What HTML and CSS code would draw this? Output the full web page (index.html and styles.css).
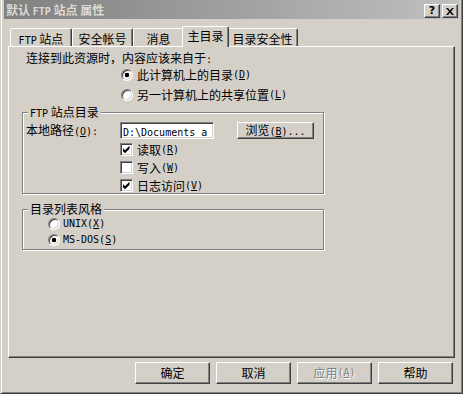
FILE: index.html
```html
<!DOCTYPE html>
<html lang="zh-CN">
<head>
  <meta charset="UTF-8" />
  <title>默认 FTP 站点 属性</title>
  <link rel="stylesheet" href="styles.css">
</head>
<body>
  <div class="window">
    <div class="titlebar">
      <span class="title">默认 <span class="lat">FTP</span> 站点 属性</span>
      <div class="caption-btns">
        <span class="cbtn help">?</span>
        <span class="cbtn">
          <svg width="8" height="7" viewBox="0 0 8 7"><path d="M0 0h2l2 2.4 2-2.4h2l-3 3.5 3 3.5h-2l-2-2.4-2 2.4h-2l3-3.5z" fill="#000"/></svg>
        </span>
      </div>
    </div>

    <div class="tabs">
      <div class="tab tab-ftp"><span class="lat">FTP</span> 站点</div>
      <div class="tab tab-acct">安全帐号</div>
      <div class="tab tab-msg">消息</div>
      <div class="tab tab-home">主目录</div>
      <div class="tab tab-sec">目录安全性</div>
    </div>

    <div class="panel">
      <div class="intro">连接到此资源时，内容应该来自于<span class="lat">:</span></div>
      <div class="opt opt-first">
        <span class="radio on"></span>此计算机上的目录<span class="lat">(<u>D</u>)</span>
      </div>
      <div class="opt opt-second">
        <span class="radio"></span>另一计算机上的共享位置<span class="lat">(<u>L</u>)</span>
      </div>

      <div class="group group-dir">
        <div class="group-title"><span class="lat">FTP</span> 站点目录</div>
        <div class="path-row">
          <span class="path-label">本地路径<span class="lat">(<u>O</u>):</span></span>
          <div class="edit"><span class="lat">D:\Documents a</span></div>
          <div class="btn btn-browse"><span>浏览<span class="lat">(<u>B</u>)...</span></span></div>
        </div>
        <div class="checks">
          <div class="check-row">
            <span class="checkbox"><svg width="9" height="9" viewBox="0 0 9 9"><path d="M1 3.3l2 2 4.5-4.5v2.9l-4.5 4.5-2-2z" fill="#000"/></svg></span>读取<span class="lat">(<u>R</u>)</span>
          </div>
          <div class="check-row">
            <span class="checkbox"></span>写入<span class="lat">(<u>W</u>)</span>
          </div>
          <div class="check-row">
            <span class="checkbox"><svg width="9" height="9" viewBox="0 0 9 9"><path d="M1 3.3l2 2 4.5-4.5v2.9l-4.5 4.5-2-2z" fill="#000"/></svg></span>日志访问<span class="lat">(<u>V</u>)</span>
          </div>
        </div>
      </div>

      <div class="group group-list">
        <div class="group-title">目录列表风格</div>
        <div class="opt opt-unix">
          <span class="radio"></span><span class="lat">UNIX(<u>X</u>)</span>
        </div>
        <div class="opt opt-dos">
          <span class="radio on"></span><span class="lat">MS-DOS(<u>S</u>)</span>
        </div>
      </div>
    </div>

    <div class="actions">
      <div class="btn">确定</div>
      <div class="btn">取消</div>
      <div class="btn disabled">应用<span class="lat">(<u>A</u>)</span></div>
      <div class="btn">帮助</div>
    </div>
  </div>
</body>
</html>
```

FILE: styles.css
```css
* {
  box-sizing: border-box;
}
body {
  margin: 0;
  background: #d4d0c8;
  font: 12px/12px "Noto Sans CJK SC", sans-serif;
  color: #000;
}
.lat {
  font-family: "DejaVu Sans Mono", monospace;
  font-size: 10px;
}

.window {
  width: 463px;
  height: 394px;
  padding: 0 3px;
  background: #d4d0c8;
  border-left: 1px solid #d4d0c8;
  border-right: 1px solid #404040;
  border-bottom: 1px solid #404040;
  box-shadow: inset 1px 0 #fff, inset -1px -1px #808080;
}

/* title bar (inactive) */
.titlebar {
  display: flex;
  justify-content: space-between;
  height: 19px;
  padding-left: 2px;
  background: linear-gradient(to right, #808080, #c0c0c0);
  color: #dedad2;
  font-weight: bold;
  line-height: 19px;
}
.caption-btns {
  display: flex;
  gap: 2px;
  margin: 4px 1px 0 0;
}
.cbtn {
  display: flex;
  align-items: center;
  justify-content: center;
  width: 16px;
  height: 14px;
  background: #d4d0c8;
  border: 1px solid;
  border-color: #fff #404040 #404040 #fff;
  box-shadow: inset -1px -1px #808080;
  color: #000;
}
.cbtn.help {
  font: bold 11px/12px "DejaVu Sans", sans-serif;
}

/* tabs */
.tabs {
  display: flex;
  align-items: flex-end;
  height: 20px;
  margin: 7px 0 0 6px;
}
.tab {
  height: 18px;
  padding-top: 4px;
  text-align: center;
  background: #d4d0c8;
  border: 1px solid;
  border-bottom: 0;
  border-color: #fff #404040 transparent #fff;
  border-radius: 2px 2px 0 0;
  box-shadow: inset -1px 0 #808080;
}
.tab-ftp { width: 62px; }
.tab-acct { width: 61px; }
.tab-msg { width: 51px; }
.tab-home {
  position: relative;
  z-index: 1;
  width: 47px;
  height: 21px;
  padding-top: 3px;
  margin: 0 -2px -1px;
}
.tab-sec { width: 71px; }

.panel {
  width: 447px;
  height: 312px;
  margin-left: 4px;
  padding: 5px 0 0 13px;
  border: 1px solid;
  border-color: #fff #404040 #404040 #fff;
  box-shadow: inset -1px -1px #808080;
}
.intro {
  margin-left: 4px;
  height: 12px;
}

.opt {
  display: flex;
  align-items: center;
  height: 12px;
}
.opt-first { margin: 5px 0 0 99px; }
.opt-second { margin: 8px 0 0 99px; }

.radio {
  flex: none;
  width: 12px;
  height: 12px;
  margin-right: 4px;
  border-radius: 50%;
  background: #fff;
  border: 1px solid;
  border-color: #808080 #fff #fff #808080;
  box-shadow: inset 1px 1px #404040, inset -1px -1px #d4d0c8;
}
.radio.on {
  background: radial-gradient(circle, #000 0 2px, #fff 2.6px);
}

/* group boxes */
.group {
  width: 302px;
  border: 1px solid #808080;
  box-shadow: 1px 1px #fff, inset 1px 1px #fff;
}
.group-title {
  display: table;
  margin: -8px 0 0 5px;
  padding: 0 2px;
  line-height: 14px;
  background: #d4d0c8;
}
.group-dir {
  margin-top: 11px;
  padding-bottom: 1px;
}
.group-list {
  margin-top: 15px;
  padding-bottom: 3px;
}

.path-row {
  display: flex;
  align-items: center;
  height: 17px;
  margin: 1px 0 0 3px;
}
.path-label {
  width: 94px;
}
.edit {
  width: 94px;
  height: 17px;
  padding-left: 2px;
  overflow: hidden;
  white-space: nowrap;
  line-height: 15px;
  background: #fff;
  border: 1px solid;
  border-color: #808080 #fff #fff #808080;
  box-shadow: inset 1px 1px #404040, inset -1px -1px #d4d0c8;
}

.checks {
  margin: 4px 0 0 97px;
}
.check-row {
  display: flex;
  align-items: center;
  height: 13px;
  margin-top: 5px;
}
.check-row:first-child {
  margin-top: 0;
}
.checkbox {
  flex: none;
  display: flex;
  align-items: center;
  justify-content: center;
  width: 13px;
  height: 13px;
  margin-right: 4px;
  background: #fff;
  border: 1px solid;
  border-color: #808080 #fff #fff #808080;
  box-shadow: inset 1px 1px #404040, inset -1px -1px #d4d0c8;
}

.opt-unix { margin: 2px 0 0 25px; }
.opt-dos { margin: 4px 0 0 25px; }
.group-list .radio { margin-right: 3px; }

/* push buttons */
.btn {
  display: flex;
  align-items: center;
  justify-content: center;
  width: 75px;
  height: 22px;
  background: #d4d0c8;
  border: 1px solid;
  border-color: #fff #404040 #404040 #fff;
  box-shadow: inset -1px -1px #808080;
}
.btn-browse {
  width: 77px;
  height: 17px;
  margin-left: 23px;
}
.btn.disabled {
  color: #808080;
  text-shadow: 1px 1px 0 #fff;
}

.actions {
  display: flex;
  justify-content: flex-end;
  gap: 6px;
  margin-top: 4px;
  padding-right: 6px;
}
```
